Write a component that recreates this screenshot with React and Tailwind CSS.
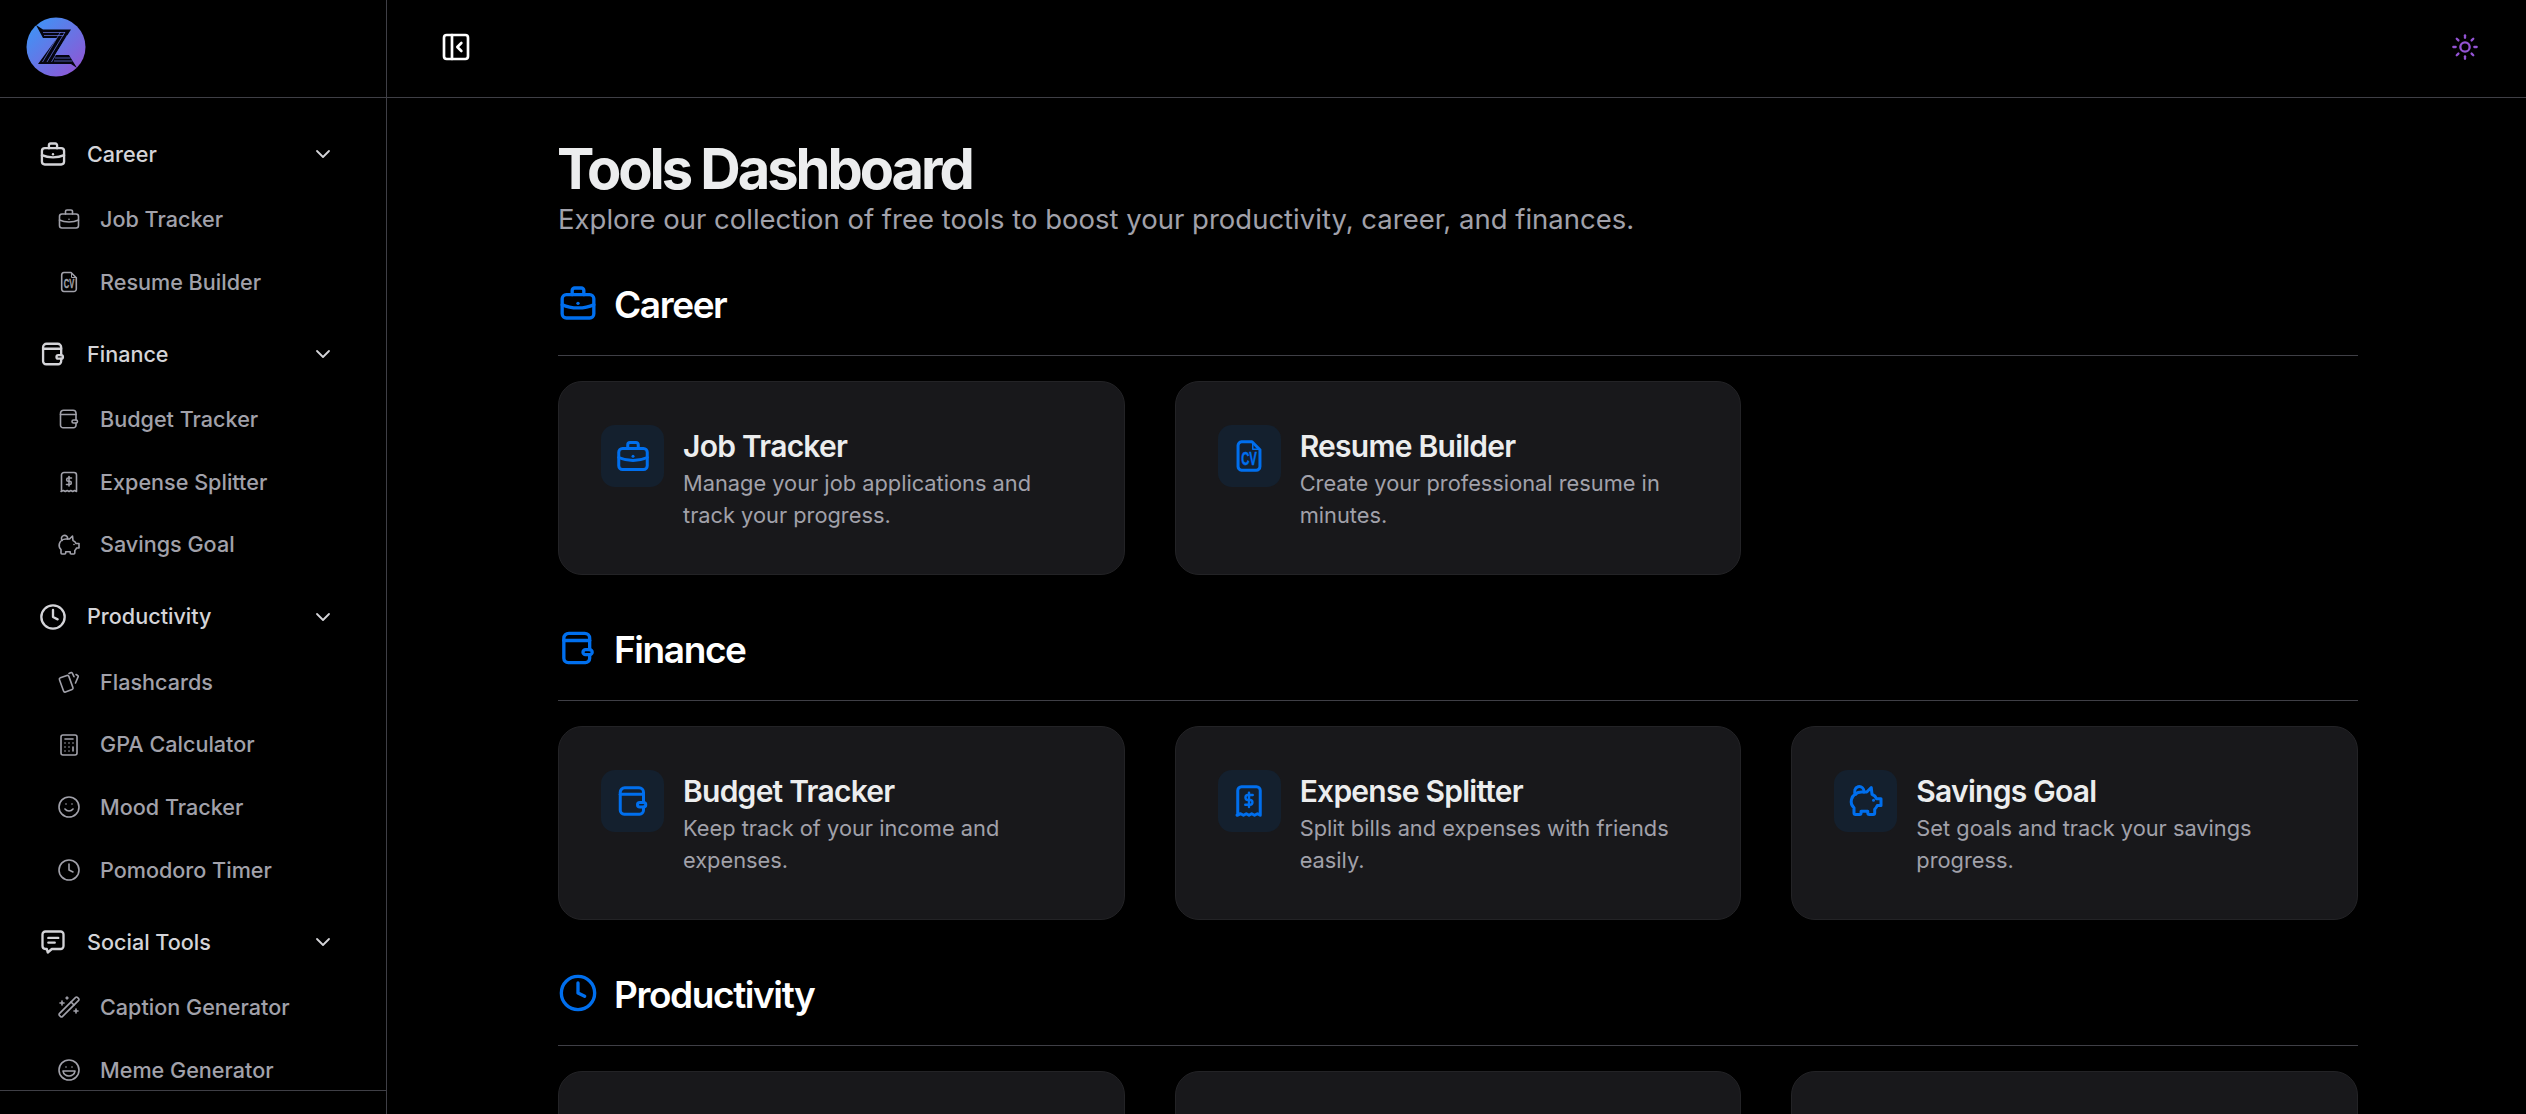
import { Calculator, ChevronDown, Clock, Laugh, PanelLeftClose, Smile, Sun, WandSparkles } from 'lucide-react';

function Icon({ children, ...props }) {
    return (
        <svg viewBox="0 0 24 24" fill="none" stroke="currentColor" strokeWidth={2} strokeLinecap="round" strokeLinejoin="round" {...props}>
            {children}
        </svg>
    );
}

function Logo() {
    return (
        <svg viewBox="0 0 60 60" className="w-[60px] h-[60px] shrink-0">
            <defs>
                <linearGradient id="logoFill" x1="0" y1="0" x2="1" y2="1">
                    <stop offset="0.1" stopColor="#3f93f5" />
                    <stop offset="0.95" stopColor="#9353d3" />
                </linearGradient>
            </defs>
            <circle cx="30" cy="30" r="29.5" fill="url(#logoFill)" />
            <polygon points="10,8 17,12.5 45,12.5 29,38 43,38 51,51 45,47 12,47 31,21 17,21" fill="#05050f" />
            <g stroke="#6a78e6" strokeWidth="0.7">
                <path d="M17 15.5 L39 15.5 M18 18.5 L37.5 18.5 M29 41 L44.5 41 M28 44 L46.5 44" />
                <path d="M39 15 L21 45 M34.5 15 L16.5 45 M41.5 18 L25.5 45" />
            </g>
        </svg>
    );
}

function BriefcaseIcon(props) {
    return (
        <Icon {...props}>
            <rect x="2.5" y="7" width="19" height="14" rx="2.5" />
            <path d="M8.5 7V4.5A1.5 1.5 0 0 1 10 3h4a1.5 1.5 0 0 1 1.5 1.5V7" />
            <path d="M2.5 13c5.5 2.6 13.5 2.6 19 0" />
            <path d="M12 12.2v.01" />
        </Icon>
    );
}

function CvIcon(props) {
    return (
        <Icon {...props}>
            <path d="M7 2.5h7l5.3 5.3V19a2.5 2.5 0 0 1-2.5 2.5H7A2.5 2.5 0 0 1 4.7 19V5A2.5 2.5 0 0 1 7 2.5Z" />
            <path d="M14.5 3v4.5h4.5" strokeWidth="1" />
            <text x="12" y="18.2" textAnchor="middle" fill="currentColor" stroke="currentColor" strokeWidth="0.3" fontFamily="'Liberation Sans',sans-serif" fontWeight="700" fontSize="12" textLength="10.5" lengthAdjust="spacingAndGlyphs">CV</text>
        </Icon>
    );
}

function WalletIcon(props) {
    return (
        <Icon {...props}>
            <path d="M19 13V6.2a3 3 0 0 0-3-3H6.5a3 3 0 0 0-3 3v12a2.6 2.6 0 0 0 2.6 2.6h10.3a2.6 2.6 0 0 0 2.6-2.6V16" />
            <path d="M3.5 7.5H19" />
            <rect x="15" y="13" width="5.5" height="3" rx="1.5" />
        </Icon>
    );
}

function ReceiptIcon(props) {
    return (
        <Icon {...props}>
            <path d="M4.5 21.5V5A2.5 2.5 0 0 1 7 2.5h10A2.5 2.5 0 0 1 19.5 5v16.5l-1.9-1-1.9 1-1.9-1-1.8 1-1.8-1-1.9 1-1.9-1-2.4 1Z" />
            <path d="M14.5 8h-3.2a1.6 1.6 0 0 0 0 3.3h1.4a1.6 1.6 0 0 1 0 3.2H9.5" strokeWidth="1.6" />
            <path d="M12 6.5v9.5" strokeWidth="1.6" />
        </Icon>
    );
}

function PiggyIcon(props) {
    return (
        <Icon {...props}>
            <path d="M12.5 6 15.5 3l.5 4.5c1.4.6 2.5 1.6 3 3h3v4.5h-2.5c-.4 1-1 1.8-1.7 2.5v2.5a1 1 0 0 1-1 1h-2.6a1 1 0 0 1-1-1v-1.2h-4.5V20a1 1 0 0 1-1 1H5a1 1 0 0 1-1-1v-3.5C2.4 15 1.8 13.2 2.3 11 3 8 6 6 9 6Z" />
            <path d="M5.2 7.5A3.1 3.1 0 1 1 10.6 6" />
            <path d="M17 11.5v.01" />
        </Icon>
    );
}

function CardsIcon(props) {
    return (
        <Icon {...props}>
            <rect x="4.2" y="6.2" width="10" height="15" rx="1.5" transform="rotate(-20 9.2 13.7)" />
            <path d="M12 3.5l1.5-.8a1.4 1.4 0 0 1 1.9.6l1.6 3.4M19 4.5l1.7 1a1 1 0 0 1 .4 1.4L18.5 13" />
        </Icon>
    );
}

function ChatIcon(props) {
    return (
        <Icon {...props}>
            <path d="M5.5 3h13A2.5 2.5 0 0 1 21 5.5v10a2.5 2.5 0 0 1-2.5 2.5H11l-3.5 3-.8-3H5.5A2.5 2.5 0 0 1 3 15.5v-10A2.5 2.5 0 0 1 5.5 3Z" />
            <path d="M8 8.5h8.5M8 12.5h5.5" />
        </Icon>
    );
}

const sidebarGroups = [
    {
        name: 'Career',
        icon: BriefcaseIcon,
        items: [
            { name: 'Job Tracker', icon: BriefcaseIcon },
            { name: 'Resume Builder', icon: CvIcon },
        ],
    },
    {
        name: 'Finance',
        icon: WalletIcon,
        items: [
            { name: 'Budget Tracker', icon: WalletIcon },
            { name: 'Expense Splitter', icon: ReceiptIcon },
            { name: 'Savings Goal', icon: PiggyIcon },
        ],
    },
    {
        name: 'Productivity',
        icon: Clock,
        items: [
            { name: 'Flashcards', icon: CardsIcon },
            { name: 'GPA Calculator', icon: Calculator },
            { name: 'Mood Tracker', icon: Smile },
            { name: 'Pomodoro Timer', icon: Clock },
        ],
    },
    {
        name: 'Social Tools',
        icon: ChatIcon,
        items: [
            { name: 'Caption Generator', icon: WandSparkles },
            { name: 'Meme Generator', icon: Laugh },
        ],
    },
];

const sections = [
    {
        name: 'Career',
        icon: BriefcaseIcon,
        tools: [
            { title: 'Job Tracker', desc: 'Manage your job applications and track your progress.', icon: BriefcaseIcon },
            { title: 'Resume Builder', desc: 'Create your professional resume in minutes.', icon: CvIcon },
        ],
    },
    {
        name: 'Finance',
        icon: WalletIcon,
        tools: [
            { title: 'Budget Tracker', desc: 'Keep track of your income and expenses.', icon: WalletIcon },
            { title: 'Expense Splitter', desc: 'Split bills and expenses with friends easily.', icon: ReceiptIcon },
            { title: 'Savings Goal', desc: 'Set goals and track your savings progress.', icon: PiggyIcon },
        ],
    },
    {
        name: 'Productivity',
        icon: Clock,
        tools: [{ key: 'a' }, { key: 'b' }, { key: 'c' }],
    },
];

function Sidebar() {
    return (
        <aside className="w-[387px] h-full shrink-0 border-r border-[#3f3f46] flex flex-col">
            <div className="h-[98px] shrink-0 border-b border-[#3f3f46] pl-[26px] pt-[17px]">
                <Logo />
            </div>
            <nav className="h-[993px] shrink-0 overflow-hidden border-b border-[#3f3f46] pt-[32px]">
                {sidebarGroups.map((group) => {
                    const GroupIcon = group.icon;
                    return (
                        <div key={group.name} className="mb-[16.6px]">
                            <div className="h-[48px] pl-[39px] pr-[51px] flex items-center text-[#d4d4d8]">
                                <GroupIcon className="w-[28px] h-[28px] shrink-0" />
                                <span className="ml-[20px] text-[21.6px] font-medium flex-1">{group.name}</span>
                                <ChevronDown className="w-[24px] h-[24px]" strokeWidth={1.8} />
                            </div>
                            <div className="mt-[10px]">
                                {group.items.map((item) => {
                                    const ItemIcon = item.icon;
                                    return (
                                        <div key={item.name} className="h-[62.7px] pl-[57px] flex items-center text-[#a1a1aa]">
                                            <ItemIcon className="w-[24px] h-[24px] shrink-0" strokeWidth={1.6} />
                                            <span className="ml-[19px] text-[21.6px] font-medium">{item.name}</span>
                                        </div>
                                    );
                                })}
                            </div>
                        </div>
                    );
                })}
            </nav>
        </aside>
    );
}

function ToolCard({ tool }) {
    const ToolIcon = tool.icon;
    if (!ToolIcon) {
        // third row starts right at the fold, its content is below the window
        return <div className="h-[194px] rounded-[24px] bg-[#18181b] border border-[#232326]" />;
    }
    return (
        <div className="h-[194px] rounded-[24px] bg-[#18181b] border border-[#232326] pl-[42px] pr-[43px] pt-[43px] flex items-start gap-[19px]">
            <div className="w-[63px] h-[62px] shrink-0 rounded-[14px] bg-[#14202e] flex items-center justify-center text-[#006fee]">
                <ToolIcon className="w-[36px] h-[36px]" />
            </div>
            <div className="min-w-0 pt-[1px]">
                <h3 className="text-[30px] leading-[41px] font-semibold text-[#ecedee] tracking-tight">{tool.title}</h3>
                <p className="text-[21.8px] leading-[32px] text-[#a1a1aa]">{tool.desc}</p>
            </div>
        </div>
    );
}

export default function App() {
    return (
        <div className="h-[1114px] overflow-hidden bg-black flex font-['Inter',sans-serif]">
            <Sidebar />
            <div className="flex-1 min-w-0 flex flex-col">
                <header className="h-[98px] shrink-0 border-b border-[#3f3f46] pl-[53px] pr-[47px] pb-[3px] flex items-center justify-between">
                    <PanelLeftClose className="w-[32px] h-[32px] text-white" />
                    <Sun className="w-[28px] h-[28px] text-[#9353d3]" />
                </header>
                <main className="flex-1 overflow-hidden pl-[170px] pr-[168px] pt-[39px]">
                    <h1 className="text-[56px] leading-[64px] font-bold text-[#ecedee] tracking-[-0.054em]">Tools Dashboard</h1>
                    <p className="ml-[1px] text-[27.5px] leading-[36px] text-[#a1a1aa]">Explore our collection of free tools to boost your productivity, career, and finances.</p>
                    <div className="ml-[1px] mt-[46px] flex flex-col gap-[53px]">
                        {sections.map((section) => {
                            const SectionIcon = section.icon;
                            return (
                                <section key={section.name}>
                                    <div className="h-[73px] border-b border-[#3f3f46] flex items-start gap-[16px]">
                                        <SectionIcon className="w-[40px] h-[40px] text-[#006fee]" />
                                        <h2 className="text-[37px] leading-[44px] font-semibold text-white tracking-[-0.038em]">{section.name}</h2>
                                    </div>
                                    <div className="grid grid-cols-3 gap-[50px] mt-[25px]">
                                        {section.tools.map((tool) => (
                                            <ToolCard key={tool.title || tool.key} tool={tool} />
                                        ))}
                                    </div>
                                </section>
                            );
                        })}
                    </div>
                </main>
            </div>
        </div>
    );
}
